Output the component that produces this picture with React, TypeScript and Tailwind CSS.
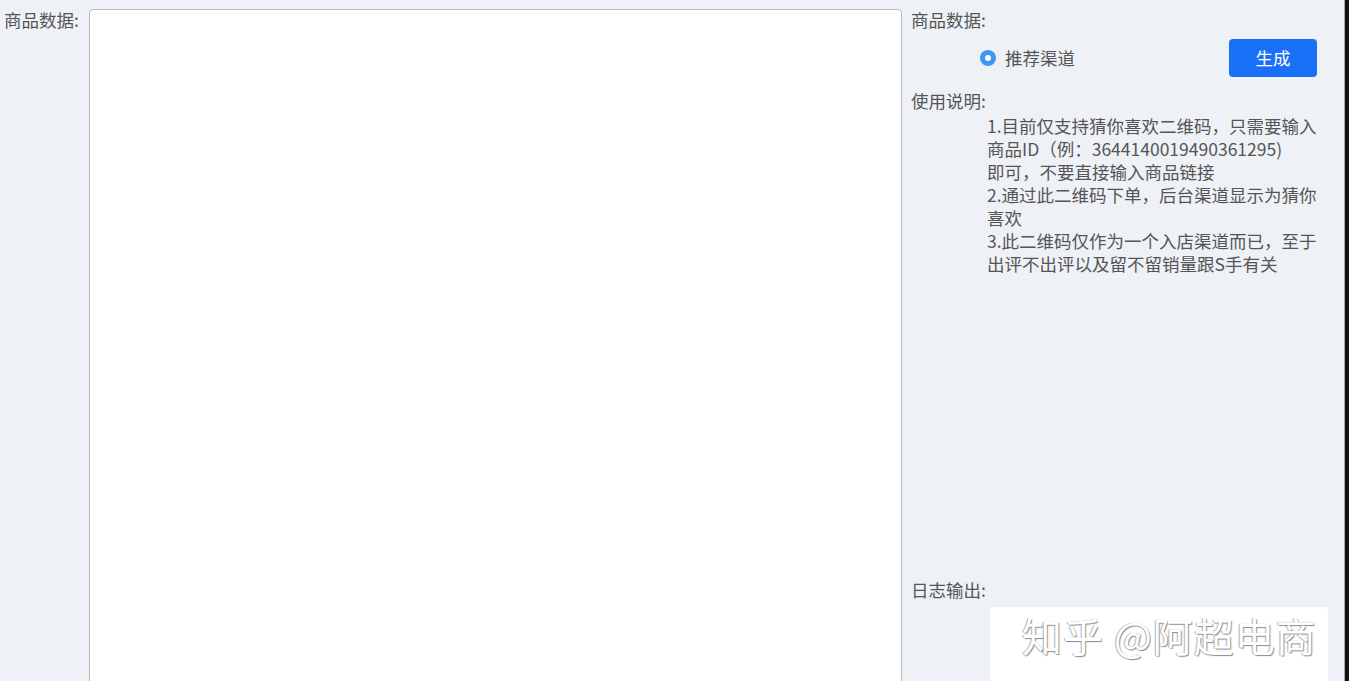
import React from 'react';

const font = { fontFamily: '"Noto Sans CJK SC", "Noto Sans", sans-serif' };

export default function App() {
  return (
    <div
      className="flex h-[681px] w-[1349px] overflow-hidden bg-[#eef2f7] text-[17.5px] text-[#555]"
      style={font}
    >
      {/* left label */}
      <div className="w-[89px] shrink-0 pl-[4px] pt-[8px] leading-[24px]">商品数据:</div>

      {/* input area */}
      <div className="mt-[9px] h-[720px] w-[813px] shrink-0 rounded-t-[4px] border border-[#b9b9b9] bg-white" />

      {/* right panel */}
      <div className="flex w-[442px] shrink-0 flex-col pl-[9px]">
        <div className="mt-[8px] leading-[24px]">商品数据:</div>

        <div className="mt-[7px] flex h-[38px] items-center">
          <span className="ml-[69px] flex h-[16px] w-[16px] items-center justify-center rounded-full bg-[#3f95f8]">
            <span className="h-[6px] w-[6px] rounded-full bg-white" />
          </span>
          <span className="ml-[9px]">推荐渠道</span>
          <button className="ml-auto mr-[27px] h-[38px] w-[88px] rounded-[4px] bg-[#1970f6] text-white">
            生成
          </button>
        </div>

        <div className="mt-[12px] leading-[24px]">使用说明:</div>
        <div className="ml-[76px] mt-[1px] w-[333px] leading-[23px]">
          1.目前仅支持猜你喜欢二维码，只需要输入
          <br />
          商品ID（例：3644140019490361295)
          <br />
          即可，不要直接输入商品链接
          <br />
          2.通过此二维码下单，后台渠道显示为猜你喜欢
          <br />
          3.此二维码仅作为一个入店渠道而已，至于出评不出评以及留不留销量跟S手有关
        </div>

        <div className="mt-auto leading-[24px]">日志输出:</div>
        <div className="relative ml-[79px] mt-[5px] h-[74px] w-[338px] rounded-t-[4px] bg-white">
          <div className="absolute left-[32px] top-[-2px] whitespace-nowrap text-[40px] tracking-[1px] text-white [text-shadow:1px_1px_1px_#8a8a8a,-1px_0_1px_#b0b0b0]">
            知乎 @阿超电商
          </div>
        </div>
      </div>

      {/* window edge */}
      <div className="w-[1px] shrink-0 bg-[#a9a9a9]" />
      <div className="flex-1 bg-[#111]" />
    </div>
  );
}
